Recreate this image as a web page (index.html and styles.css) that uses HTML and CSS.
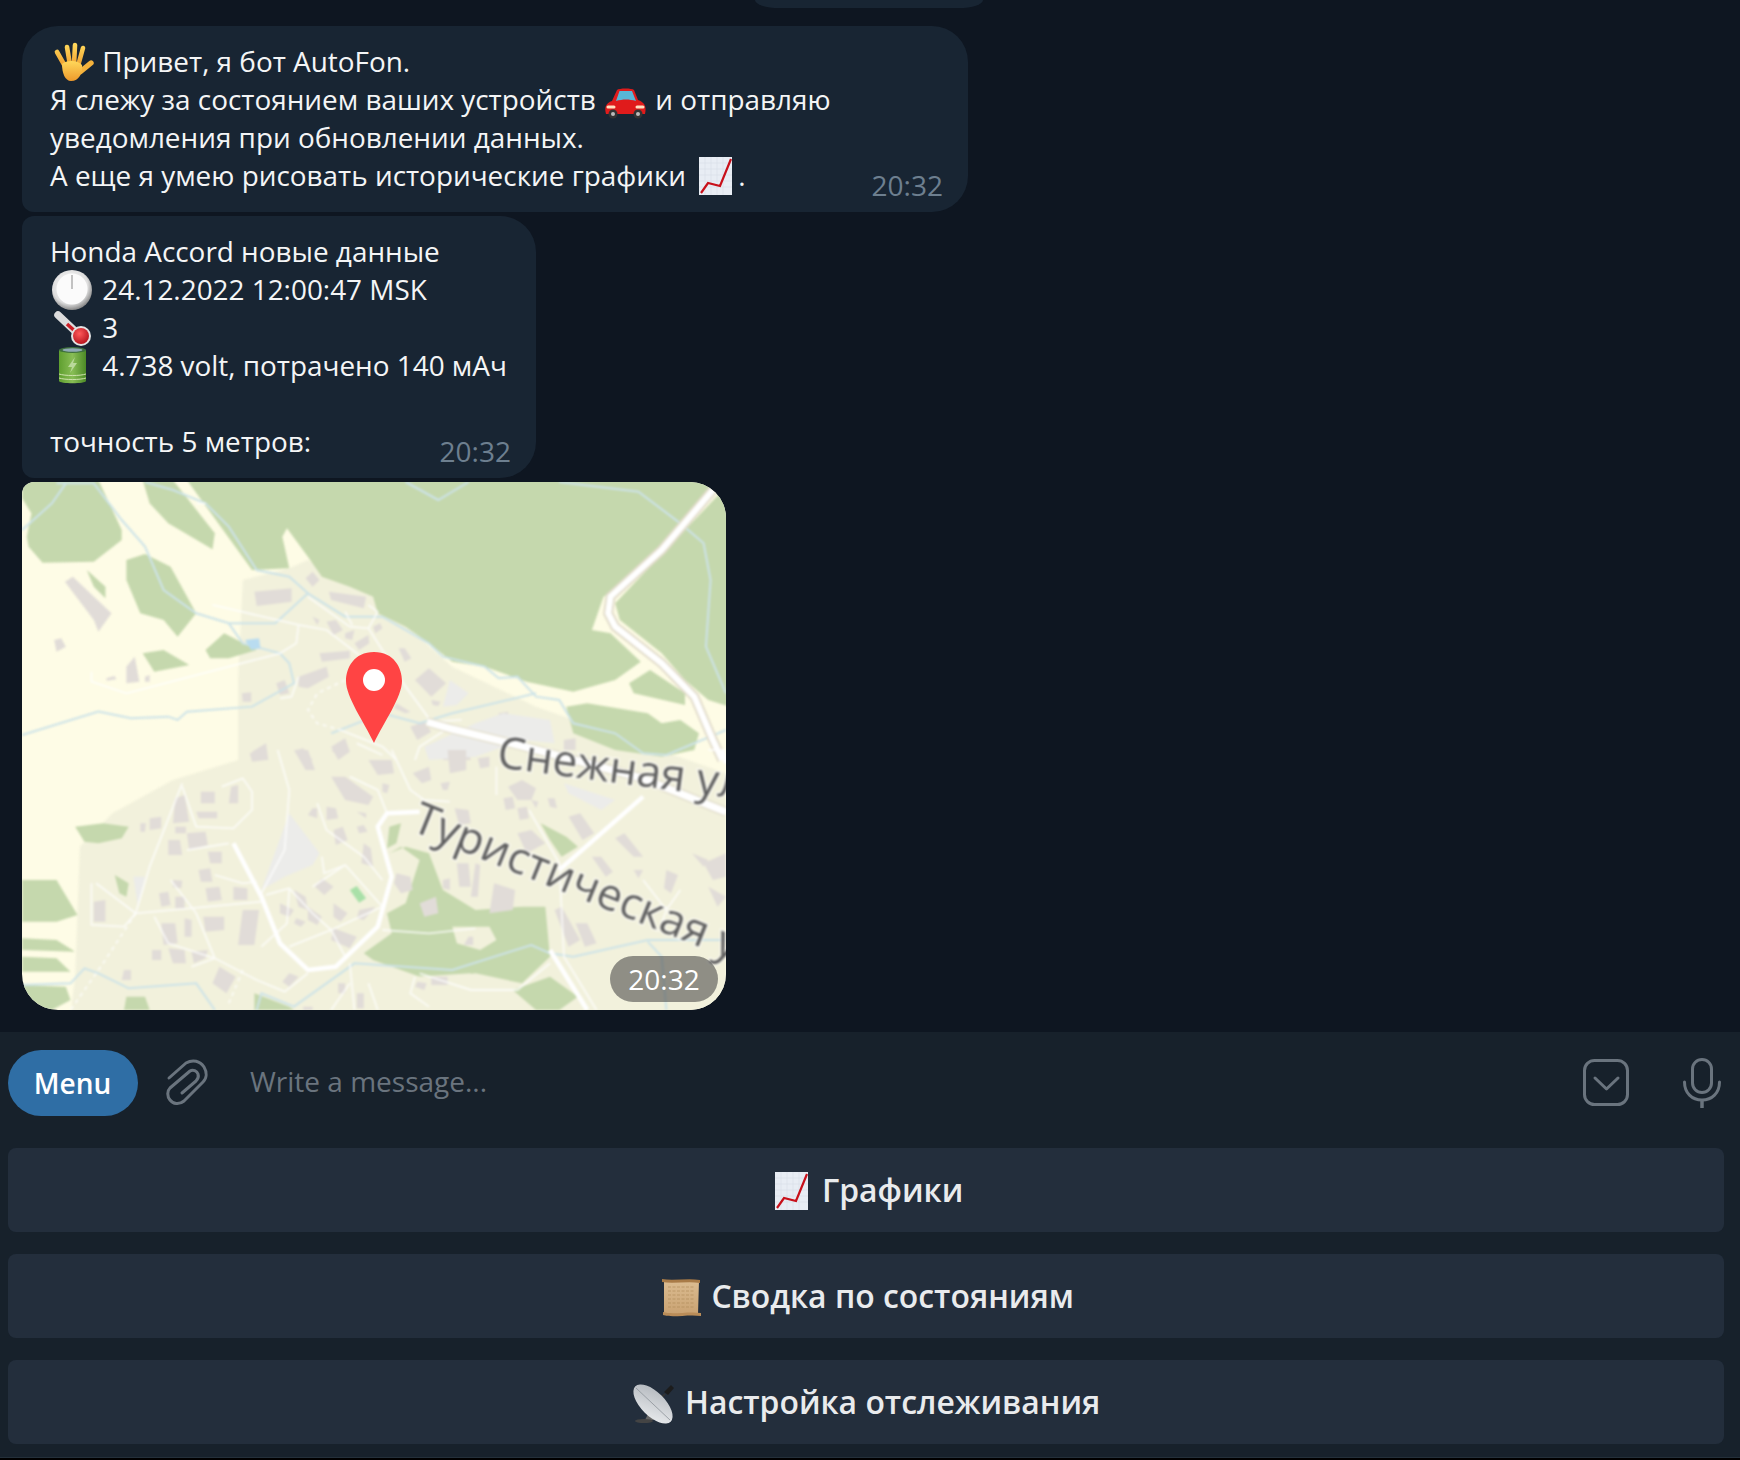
FILE: index.html
```html
<!DOCTYPE html>
<html lang="ru">
<head>
<meta charset="utf-8">
<title>AutoFon</title>
<link rel="stylesheet" href="styles.css">
</head>
<body>
<svg class="defs" width="0" height="0" aria-hidden="true">
  <defs>
    <linearGradient id="gHand" x1="0" y1="0" x2="0" y2="1"><stop offset="0" stop-color="#ffd75a"/><stop offset="1" stop-color="#ee9a2c"/></linearGradient>
    <radialGradient id="gClock" cx=".45" cy=".4" r=".62"><stop offset="0" stop-color="#ffffff"/><stop offset=".72" stop-color="#dedede"/><stop offset="1" stop-color="#7e7e7e"/></radialGradient>
    <radialGradient id="gBulb" cx=".4" cy=".35" r=".7"><stop offset="0" stop-color="#ff5a5a"/><stop offset="1" stop-color="#b5121b"/></radialGradient>
    <linearGradient id="gBatt" x1="0" y1="0" x2="1" y2="0"><stop offset="0" stop-color="#5f9f2f"/><stop offset=".5" stop-color="#88bd55"/><stop offset="1" stop-color="#4c8a26"/></linearGradient>
    <linearGradient id="gScroll" x1="0" y1="0" x2="0" y2="1"><stop offset="0" stop-color="#dcbd92"/><stop offset="1" stop-color="#c9a272"/></linearGradient>
    <linearGradient id="gDish" x1="0" y1="0" x2="1" y2="1"><stop offset="0" stop-color="#aeb3b9"/><stop offset="1" stop-color="#eef0f2"/></linearGradient>
    <symbol id="chart" viewBox="0 0 45 38">
      <rect x="6" y="0" width="33" height="38" fill="#e8edf4"/>
      <path d="M6 6h33M6 12h33M6 18h33M6 24h33M6 30h33M12 0v38M18 0v38M24 0v38M30 0v38" stroke="#d6dee8" stroke-width=".6"/>
      <path d="M8 36l7-10 12 3L38 2" fill="none" stroke="#c8101a" stroke-width="2.2"/>
    </symbol>
  </defs>
</svg>

<main class="chat">
  <div class="stub"></div>

  <section class="bubble first">
    <p class="msg"><svg class="emo" viewBox="0 0 45 38"><path d="M7 9L16 25M17 4L20 22M25 2L24 22M33 5L28 23" stroke="url(#gHand)" stroke-width="4.6" stroke-linecap="round"/><path d="M30 29L41 20" stroke="#f4b23c" stroke-width="5.4" stroke-linecap="round"/><path d="M12 21C16 17 28 17 32 22C33 30 29 38 21 38C15 38 12 30 12 21Z" fill="url(#gHand)"/></svg> Привет, я бот AutoFon.
Я слежу за состоянием ваших устройств <svg class="emo" viewBox="0 0 45 38"><path d="M3 33C1 26 3 22 9 20L14 9C16 7 29 7 31 9L35 19C41 21 44 25 42 33Z" fill="#e01b1b"/><path d="M13 20L16.500 10H29L33 20C26 18 20 18 13 20Z" fill="#59b6d6"/><path d="M5 26h6M34 26h6" stroke="#ffe0c0" stroke-width="3" stroke-linecap="round"/><circle cx="10" cy="33" r="4.500" fill="#333"/><circle cx="10" cy="33" r="2" fill="#bbb"/><circle cx="35" cy="33" r="4.500" fill="#333"/><circle cx="35" cy="33" r="2" fill="#bbb"/></svg> и отправляю
уведомления при обновлении данных.
А еще я умею рисовать исторические графики <svg class="emo"><use href="#chart"/></svg>.</p>
    <time class="stamp">20:32</time>
  </section>

  <section class="bubble middle">
    <p class="msg">Honda Accord новые данные
<svg class="emo" viewBox="0 0 45 38"><circle cx="22" cy="19" r="20" fill="url(#gClock)"/><circle cx="22" cy="18" r="15.500" fill="#fbfbfb"/><path d="M22 4v14" stroke="#aaa" stroke-width="1.400"/></svg> 24.12.2022 12:00:47 MSK
<svg class="emo" viewBox="0 0 45 38"><path d="M8 6L26 23" stroke="#dcdcdc" stroke-width="7.500" stroke-linecap="round"/><path d="M17 15L27 24" stroke="#cc1d25" stroke-width="3.500"/><circle cx="31" cy="27" r="10" fill="#e4e4e4"/><circle cx="31" cy="27" r="8" fill="url(#gBulb)"/></svg> 3
<svg class="emo" viewBox="0 0 45 38"><path d="M9 3V34C9 37 36 37 36 34V3Z" fill="url(#gBatt)"/><ellipse cx="22.500" cy="3" rx="13.500" ry="3" fill="#3e6f3d"/><ellipse cx="22.500" cy="3" rx="10" ry="1.800" fill="#8fa9b5"/><path d="M9 27C15 29 30 29 36 27M9 31C15 33 30 33 36 31" fill="none" stroke="#cfe3ae" stroke-width="1"/><path d="M25 10L18 20H22L20 26L27 16H23Z" fill="#b9d99a"/></svg> 4.738 volt, потрачено 140 мАч

точность 5 метров:</p>
    <time class="stamp">20:32</time>
  </section>

  <figure class="bubble last map">
    <svg class="map-art" viewBox="0 0 704 528" preserveAspectRatio="none">
      <rect width="704" height="528" fill="#fefce6"/>
      <g class="map-soft">
      <g transform="translate(-12 -2) scale(.4655 .3333)">
        <path class="urban" d="M500 300L600 265L640 240L780 350L950 560L1130 680L1538 880V1600H130L140 1490L150 1100L220 1000L350 900L490 840L490 600Z"/>
        <g class="forest">
          <path d="M380 0L520 270L600 265L585 170L595 145L640 230L670 290L730 320L780 350L790 400L850 440L900 490L950 545L1020 560L1110 605L1210 635L1300 600L1355 545L1290 460L1250 450L1275 350L1340 290L1400 220L1500 30L1510 0Z"/>
          <path d="M1525 40L1545 30V680L1500 660L1450 600L1400 520L1310 420L1300 370Z"/>
          <path d="M26 0H190L240 150L240 180L180 245L70 248L40 200L36 170L46 100L26 55Z"/>
          <path d="M285 0L300 70L340 130L435 208L440 160L350 0Z"/>
          <path d="M250 240L290 222L345 260L400 400L360 470L330 420L280 400L250 300Z"/>
          <path d="M165 270L205 320L205 355L180 320Z"/>
          <path d="M420 510L460 460L530 510L470 535L430 535Z"/>
          <path d="M285 520L330 510L385 555L310 575Z"/>
          <path d="M1330 610L1375 570L1450 640L1450 675L1340 640Z"/>
          <path d="M1195 680L1240 670L1370 700L1400 730L1440 720L1480 760L1470 810L1400 830L1300 810L1210 760Z"/>
        </g>
        <path class="building" d="M118 305L135 290L218 400L190 455L180 420ZM525 335L605 325L605 365L530 378ZM635 295L650 275L665 300L650 320ZM685 335L765 350L760 385L690 360ZM680 425L700 420L715 450L695 465ZM720 460L740 450L735 480L720 475ZM740 490L770 465L772 490L750 510ZM650 410L665 420L660 435ZM780 440L795 430L800 445L785 460ZM665 520L730 512L730 535L670 545ZM620 590L680 560L685 590L640 625L620 620ZM572 610L590 600L600 640L580 645ZM498 640L518 637L518 665L500 665ZM95 480L110 475L120 500L100 515ZM250 560L268 530L278 605L250 610ZM207 595L225 588L228 598L208 602ZM835 505L848 505L862 535L848 545ZM870 600L900 565L937 610L905 650ZM830 670L860 695L850 700L825 685ZM860 740L890 725L905 755L875 780ZM905 660L925 665L920 678L908 675ZM690 800L720 775L730 815L705 840ZM615 810L630 805L650 840L625 840ZM520 815L550 790L555 840L520 840ZM290 590L300 585L300 605L290 605ZM1050 700L1070 695L1072 725L1050 725ZM1040 730L1060 735L1055 760L1045 755ZM1190 780L1215 775L1215 810L1190 810ZM940 810L980 805L990 840H930Z"/>
        <path class="pale" d="M930 680L945 600L985 640L960 675ZM890 800L1000 730L1060 700L1160 720L1170 790L1100 780L1000 830L900 840Z"/>
        <g class="river">
          <path d="M26 150L90 70L120 10M100 10H180L240 120L290 200L330 330L400 400L470 430L570 430L640 340L600 290L530 270L470 140L420 70L350 30L290 6"/>
          <path d="M26 765L190 695L260 715L340 710L360 720L380 695L520 680L610 610L600 550L580 520L500 490L470 430"/>
          <path d="M640 340L720 410L800 410L900 490L930 530L1020 560L1050 595L1090 590L1130 650L1180 660L1210 730L1300 760L1360 820L1410 825L1538 750"/>
          <path d="M690 760L800 700L880 730L950 700L1130 640M850 6L920 60L985 6M1180 6L1350 35L1440 130L1490 190L1505 300L1495 500L1538 640"/>
        </g>
        <path class="pond" d="M505 480L535 475L538 505L518 510Z"/>
        <path class="road-casing" d="M1510 30L1400 210L1290 350L1285 400L1300 440L1400 550L1470 650L1510 780L1530 840"/>
        <path class="road-wide" d="M1510 30L1400 210L1290 350L1285 400L1300 440L1400 550L1470 650L1510 780L1530 840"/>
        <g class="road-thin">
          <path d="M435 375L620 435L680 450L750 525M640 350L730 440L770 445L790 395L770 375M720 395L735 435M770 445L850 620L905 725M620 435L615 490L580 520L250 640L175 605L175 575M620 590L605 650L580 655M710 750L800 800L830 840M905 725L970 720M935 750L880 800L870 840M745 790L800 825M400 70L420 70"/>
          <path class="dashed" d="M720 600L660 640L640 690L660 730L710 750"/>
        </g>
      </g>
      <g transform="translate(-12 268) scale(.4655 .3333)">
        <g class="forest">
          <path d="M760 610L820 550L810 490L850 460L880 330L840 290L815 310L850 290L900 310L930 420L1000 480L1100 470L1150 470L1160 620L1100 700L1000 670L900 690L780 630Z"/>
          <path d="M1160 680L1220 740L1180 780L1130 780L1080 720Z"/>
          <path d="M26 390L100 390L145 495L100 515L26 515Z"/>
          <path d="M26 565L100 570L140 605L26 600Z"/>
          <path d="M26 620L100 625L130 665L26 665Z"/>
          <path d="M26 705L120 710L130 750L90 780H60L26 730Z"/>
          <path d="M140 230L200 220L255 230L240 265L190 280L160 275Z"/>
          <path d="M225 375L255 400L250 440L235 430Z"/>
          <path d="M250 740H290L300 780H245Z"/>
          <path d="M525 730L600 770L610 780H525Z"/>
          <path d="M1140 220L1195 260L1220 290L1185 320L1160 270Z"/>
          <path d="M815 230L840 220L830 280L810 295Z"/>
        </g>
        <path class="urban-soft" d="M950 530L1030 530L1045 570L1010 600L960 580ZM870 680L990 670L990 720L960 775H900L870 740Z"/>
        <path class="pale" d="M540 420L600 190L665 310L650 345L590 380ZM1190 100L1300 150L1270 180L1200 130ZM265 380L290 380L275 470Z"/>
        <path class="building" d="M515 10L550 0L550 30L520 35ZM610 0H640L655 60L635 60ZM690 0H730L710 25ZM770 30H820L825 70L790 75ZM865 70L900 50L905 90L885 100ZM925 100L945 95L940 120L930 120ZM940 0H980V60L945 70ZM1005 25L1030 20V50L1010 55ZM690 80H720L780 140L770 165L720 150ZM800 100L815 105L810 130L800 125ZM1070 110L1100 90L1130 115L1120 150H1090ZM1060 145L1080 140L1085 175L1065 180ZM1090 175L1110 170L1115 205L1095 210ZM1120 150L1135 155L1130 175ZM955 175L985 180L990 220L965 225ZM650 175H660V205L640 195ZM680 170L700 175L705 205L680 210ZM745 185L765 190V205ZM695 240L715 230L725 270L700 285ZM745 230L760 225L768 245L750 250ZM760 280L775 295L780 350L755 340ZM410 125H440V160H410ZM400 185H445V205H405ZM475 110L490 105V160H470ZM300 205L325 200V235L300 240ZM280 220H292L290 245H280ZM355 145L375 135L385 215L350 220ZM355 230H378V250H355ZM380 250L420 245L425 285L385 300ZM340 270H365L370 315H340ZM425 305H455V340H430ZM405 360L430 355L435 395L410 395ZM350 390L370 392L368 415L350 412ZM320 430L340 425L345 465L325 470ZM420 415L450 410L455 450L425 455ZM480 410L510 415L510 450L480 450ZM355 440L375 440L375 475L355 475ZM180 455L205 450L205 515L180 515ZM500 480L535 480L525 585L490 585ZM415 500L460 500L460 540L420 545ZM325 520L355 520L360 580L330 585ZM340 595L375 600L378 640L350 640ZM305 600L325 600L325 630L305 630ZM390 605L425 600L420 625L395 640ZM375 505L390 510L390 560L375 560ZM670 385L695 410L675 435L655 410ZM610 420L635 440L640 480L620 470ZM580 460L610 480L600 500L580 490ZM640 470L670 500L660 525L640 510ZM695 460L725 490L710 515L695 500ZM750 480L785 470L760 510L745 505ZM615 505L635 515L625 530L610 520ZM695 535L745 560L730 595L690 570ZM830 370L860 380L865 420L840 430L825 400ZM880 460L915 440L920 490L890 500ZM960 340L985 340L990 410L965 410ZM1000 340L1010 345L1005 440L990 440ZM930 390L945 385L945 420L930 415ZM1040 400L1085 420L1080 480L1030 490ZM1170 480L1185 470L1225 570L1200 590ZM1215 520L1240 520L1260 580L1235 590ZM1200 200L1225 190L1255 250L1230 270ZM1090 250L1120 240L1150 280L1110 310ZM1155 145L1170 145L1175 175L1160 170ZM1250 320L1270 320L1295 365L1280 380ZM1300 265L1320 250L1360 320L1340 320ZM1340 360L1360 360L1350 385ZM1410 360L1435 375L1420 430L1405 415ZM1465 310L1500 330L1490 350ZM1500 410L1538 440L1520 470ZM1490 340L1538 310V380L1510 390ZM905 680H940V705H905ZM875 695L895 700L890 720L870 710ZM985 560H995V585H975ZM600 670L620 680L600 710L585 695ZM705 700H720V730H705ZM745 730H760V775H745ZM245 660L260 660V690H240ZM450 650L485 680L465 730L435 700ZM630 770H650V780H630Z"/>
        <path class="park" d="M730 420L745 408L765 445L750 458Z"/>
        <g class="river">
          <path d="M26 705L130 700L160 655L190 670L255 715L400 700L440 780M530 780L540 730L610 770L740 640L950 660L1120 585L1160 610L1210 620L1370 570L1538 570"/>
          <path d="M1370 575L1400 620L1410 780"/>
        </g>
        <g class="road-thin">
          <path d="M575 0L600 120L590 300L540 430M660 160L680 240L760 320L800 390M730 80L790 120L810 190M820 0L860 120L890 150L945 155M370 100L300 350L270 490M455 110L500 85L520 125L520 180L480 235L400 230L370 110M380 300L470 280M185 400L270 490L540 455M175 400L175 525L245 530L270 490M310 500L340 580L440 625L530 690L590 725L640 670M400 490L440 625L390 650M345 390L400 490M550 435L600 415L650 490L690 540M650 410L720 345L800 470L690 540M600 415L595 520L540 590M720 345L675 370L670 320M600 590L690 540L720 620M730 640L740 780M800 540L900 550L1000 535M440 375L500 400L530 395M1045 50V135M1115 180L1180 340L1190 620L1260 780M1440 420L1410 480L1360 390M1410 480L1400 520M880 670L990 720L1090 720L1160 640M770 700L790 780M730 700L690 780M870 680L860 730L900 770M1500 0L1538 0"/>
          <path class="dashed" d="M270 490L200 640L130 780M500 660L470 760"/>
        </g>
        <path class="road-mid" d="M480 280L540 440L580 580L640 660L700 650L790 530L820 380L790 230L810 190L880 185"/>
        <path class="road-mid" d="M1180 360L1360 140M1160 600L1240 780M1530 0L1538 40"/>
      </g>
      <path class="road-casing-map" d="M405 240L430 247L500 264L620 296L704 330"/>
      <path class="road-white-map" d="M405 240L430 247L500 264L620 296L704 330"/>
      <text class="street" transform="translate(474 285) rotate(7.500)">Снежная ул</text>
      <text class="street" transform="translate(388 348) rotate(22)">Туристическая ул</text>
      </g>
      <path class="pin" d="M352 170C372 170 380 186 380 199C380 215 362 240 352 261C342 240 324 215 324 199C324 186 332 170 352 170Z"/>
      <ellipse class="pin-hole" cx="352" cy="198" rx="11" ry="11"/>
    </svg>
    <time class="badge">20:32</time>
  </figure>
</main>

<footer class="composer">
  <div class="input-row">
    <button class="menu-btn" type="button">Menu</button>
    <svg class="clip" viewBox="0 0 40 46"><path d="M2 18L19 3C26 -1 33 1 37 7C40 12 40 18 36 22L17 41C12 45 6 44 3 40C0 36 0 31 3 28L23 11C26 9 30 11 31 14C32 17 31 19 29 21L15 33" fill="none" stroke="#6a747e" stroke-width="3" stroke-linecap="round" stroke-linejoin="round"/></svg>
    <span class="placeholder">Write a message...</span>
    <svg class="box-icon" viewBox="0 0 46 47"><rect x="1.500" y="1.500" width="43" height="44" rx="10" fill="none" stroke="#6a747e" stroke-width="3"/><path d="M12 19L23.500 30L35 19" fill="none" stroke="#6a747e" stroke-width="3" stroke-linecap="round" stroke-linejoin="round"/></svg>
    <svg class="mic-icon" viewBox="0 0 38 50"><rect x="9.500" y="1.500" width="19" height="33" rx="9.500" fill="none" stroke="#6a747e" stroke-width="3"/><path d="M1.500 24C1.500 35 9 42 19 42C29 42 36.500 35 36.500 24" fill="none" stroke="#6a747e" stroke-width="3" stroke-linecap="round"/><path d="M19 42V50" stroke="#6a747e" stroke-width="3.500"/></svg>
  </div>
  <div class="keyboard">
    <button class="key" type="button"><svg class="emo key-emo"><use href="#chart"/></svg> Графики</button>
    <button class="key" type="button"><svg class="emo key-emo" viewBox="0 0 45 38"><path d="M6 2C15 4 30 1 41 3L40 36C30 34 15 38 6 36Z" fill="url(#gScroll)"/><path d="M10 9h27M10 13h27M10 17h27M10 21h27M10 25h27M10 29h27" stroke="#ad8656" stroke-width=".6" stroke-dasharray="3 1.500"/><path d="M4 1C15 3 30 0 42 2L42 5C30 3 15 6 4 4Z" fill="#a97b47"/><path d="M5 34C15 37 30 33 43 35L43 38C30 36 15 40 5 37Z" fill="#b98c58"/></svg> Сводка по состояниям</button>
    <button class="key" type="button"><svg class="emo key-emo" viewBox="0 0 45 38"><path d="M24 19L33 10" stroke="#333" stroke-width="2"/><path d="M32 8L39 1L42 4L36 11Z" fill="#1c1c1c"/><path d="M17 28L13 36H22L21 28Z" fill="#666"/><ellipse cx="12" cy="37" rx="9" ry="2" fill="#444"/><ellipse cx="21" cy="20" rx="25" ry="12" transform="rotate(45 21 20)" fill="url(#gDish)"/><path d="M4 4L38 36" stroke="#8d9399" stroke-width=".8"/></svg> Настройка отслеживания</button>
  </div>
</footer>
</body>
</html>
```

FILE: styles.css
```css
* { box-sizing: border-box; }

html, body {
  margin: 0;
  padding: 0;
}

body {
  width: 1740px;
  height: 1460px;
  overflow: hidden;
  background: #000;
  font-family: "Open Sans", "Noto Sans", sans-serif;
  display: flex;
  flex-direction: column;
}

.defs { position: absolute; }

.chat {
  height: 1032px;
  flex: none;
  background: #0e1621;
  padding: 0 0 22px 22px;
  display: flex;
  flex-direction: column;
  align-items: flex-start;
  gap: 4px;
}

.stub {
  width: 228px;
  height: 8px;
  margin: 0 0 14px 733px;
  background: #182533;
  border-radius: 0 0 24px 24px / 0 0 8px 8px;
}

.bubble {
  position: relative;
  background: #182533;
  margin: 0;
  padding: 16px 24px 18px 28px;
  display: flex;
  align-items: flex-end;
}

.first { width: 946px; border-radius: 36px 36px 36px 12px; }
.middle { width: 514px; border-radius: 12px 36px 36px 12px; }
.last { border-radius: 12px 36px 36px 36px; }

.msg {
  margin: 0;
  flex: 1;
  white-space: pre;
  color: #f4f5f6;
  font-size: 27.9px;
  line-height: 38px;
}

.emo {
  display: inline-block;
  width: 45px;
  height: 38px;
  vertical-align: top;
  position: relative;
  top: 1px;
  overflow: visible;
}

.stamp {
  position: absolute;
  right: 25px;
  bottom: 8px;
  color: #6d7f8f;
  font-size: 28px;
  line-height: 38px;
}

.map {
  width: 704px;
  height: 528px;
  padding: 0;
  overflow: hidden;
}

.map-art {
  display: block;
  width: 704px;
  height: 528px;
}

.map-art path { vector-effect: non-scaling-stroke; }

.map-soft { filter: blur(.8px); }

.urban { fill: #f2f1dc; }
.urban-soft { fill: #f2f1dc; }
.forest path { fill: #c5d8ad; }
.building { fill: #e1dcd8; }
.pale { fill: #ececea; }
.park { fill: #a9e0a8; }
.pond { fill: #b9dcf0; }

.river path {
  fill: none;
  stroke: #cde3e8;
  stroke-width: 2;
}

.road-casing {
  fill: none;
  stroke: #e2dccb;
  stroke-width: 10;
}

.road-wide {
  fill: none;
  stroke: #fff;
  stroke-width: 6;
}

.road-thin path {
  fill: none;
  stroke: #fff;
  stroke-width: 1.8;
  opacity: .75;
}

.road-thin .dashed { stroke-dasharray: 4 4; }

.road-mid {
  fill: none;
  stroke: #fff;
  stroke-width: 4.5;
  stroke-linejoin: round;
}

.road-casing-map {
  fill: none;
  stroke: #e4e0cf;
  stroke-width: 10;
}

.road-white-map {
  fill: none;
  stroke: #fff;
  stroke-width: 7;
}

.street {
  font-family: "Open Sans", sans-serif;
  font-size: 44px;
  fill: #5f5f5f;
  stroke: #fff;
  stroke-width: 3px;
  stroke-opacity: .6;
  paint-order: stroke;
}

.pin { fill: #ff4444; }
.pin-hole { fill: #fff; }

.badge {
  position: absolute;
  right: 8px;
  bottom: 8px;
  width: 108px;
  height: 46px;
  border-radius: 23px;
  background: rgba(70, 70, 70, .58);
  color: #fff;
  font-size: 28px;
  line-height: 46px;
  text-align: center;
}

.composer {
  height: 426px;
  flex: none;
  background: #17212b;
  border-bottom: 1px solid #24303a;
  display: flex;
  flex-direction: column;
  padding: 18px 16px 0 8px;
}

.input-row {
  height: 66px;
  display: flex;
  align-items: center;
}

.menu-btn {
  width: 130px;
  height: 66px;
  border: 0;
  border-radius: 33px;
  background: #2f6ea5;
  color: #fff;
  font: 600 28px/66px "Open Sans", sans-serif;
  padding: 0 1px 0 0;
}

.clip {
  width: 40px;
  height: 46px;
  margin-left: 29px;
  overflow: visible;
}

.placeholder {
  margin-left: 43px;
  flex: 1;
  color: #6a747e;
  font-size: 28px;
  line-height: 66px;
  position: relative;
  top: -2px;
}

.box-icon {
  width: 46px;
  height: 47px;
  margin-top: -2px;
}

.mic-icon {
  width: 38px;
  height: 50px;
  margin-left: 54px;
  margin-right: 3px;
}

.keyboard {
  margin-top: 32px;
  display: flex;
  flex-direction: column;
  gap: 22px;
}

.key {
  height: 84px;
  border: 0;
  border-radius: 8px;
  background: #232e3c;
  color: #e9ebed;
  font: 600 31.9px/40px "Open Sans", sans-serif;
  padding: 0;
  white-space: pre;
}

.key-emo {
  top: 0;
  vertical-align: -8px;
}
```
